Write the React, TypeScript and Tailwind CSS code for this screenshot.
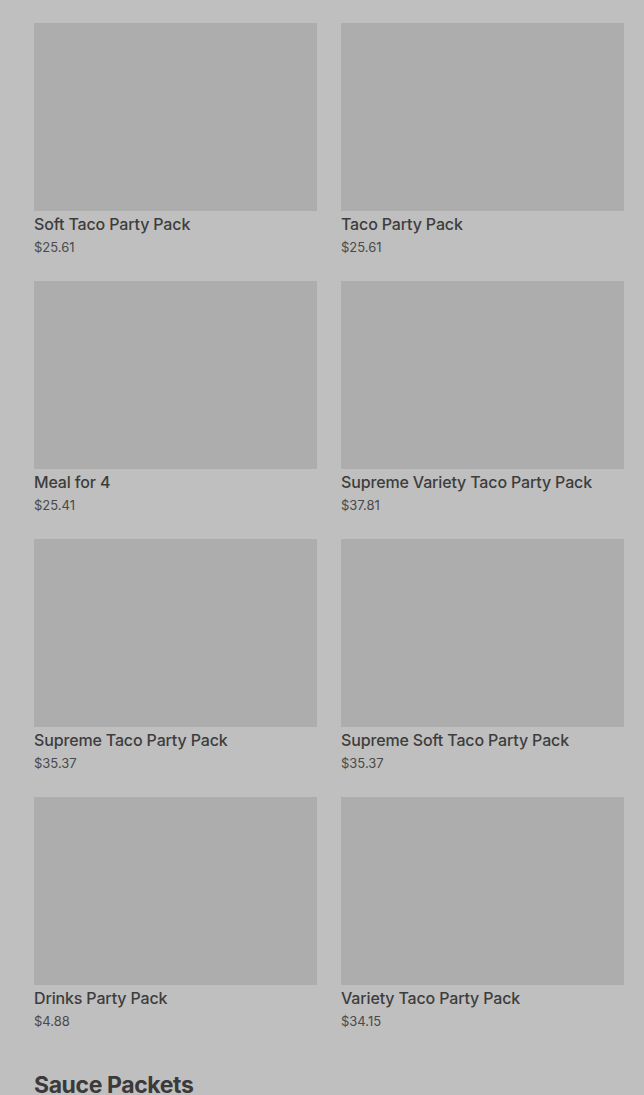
const items = [
  { name: "Soft Taco Party Pack", price: "$25.61" },
  { name: "Taco Party Pack", price: "$25.61" },
  { name: "Meal for 4", price: "$25.41" },
  { name: "Supreme Variety Taco Party Pack", price: "$37.81" },
  { name: "Supreme Taco Party Pack", price: "$35.37" },
  { name: "Supreme Soft Taco Party Pack", price: "$35.37" },
  { name: "Drinks Party Pack", price: "$4.88" },
  { name: "Variety Taco Party Pack", price: "$34.15" },
];

export default function App() {
  return (
    <div
      className="min-h-[1095px] bg-[#bfbfbf] pl-[34px] pr-[20px] pt-[23px] text-[#3d3d3d]"
      style={{ fontFamily: "Inter, 'Noto Sans', sans-serif" }}
    >
      <div className="grid grid-cols-2 gap-x-6 gap-y-6">
        {items.map((item) => (
          <div key={item.name} className="flex flex-col">
            <div className="h-[188px] bg-[#adadad]" />
            <div className="mt-[3px] text-[16px] font-medium leading-5 tracking-[-0.15px]">
              {item.name}
            </div>
            <div className="mt-[3px] text-[13px] leading-5 text-[#4a4a4a]">
              {item.price}
            </div>
          </div>
        ))}
      </div>
      <h2 className="mt-[40px] text-[23px] font-bold leading-7 tracking-[-0.4px] text-[#3a3a3a]">
        Sauce Packets
      </h2>
    </div>
  );
}
